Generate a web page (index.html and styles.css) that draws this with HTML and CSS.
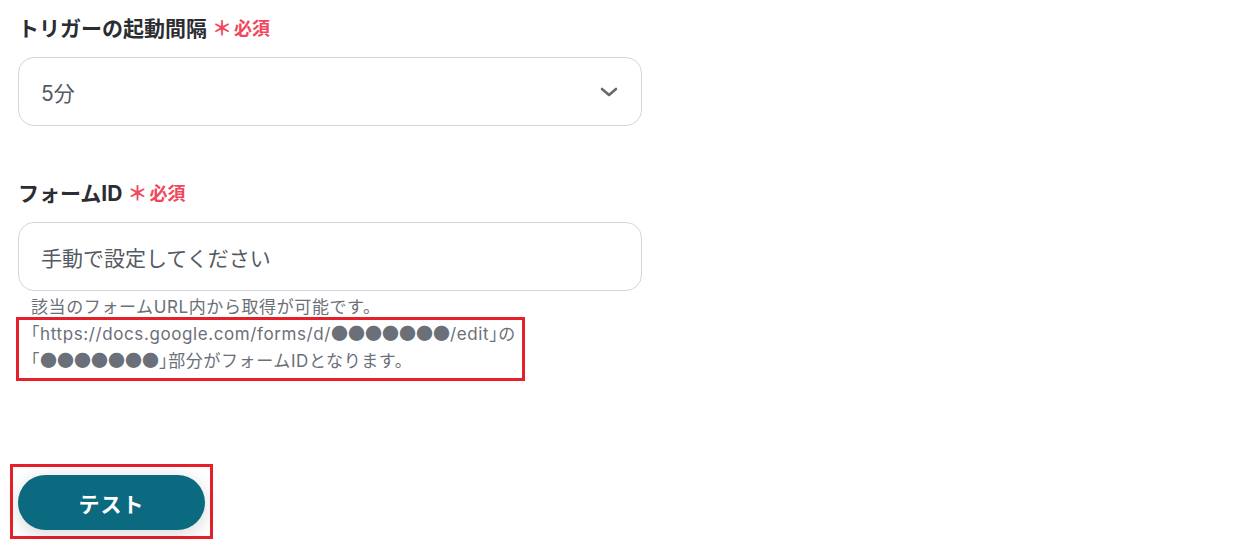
FILE: index.html
```html
<!DOCTYPE html>
<html lang="ja">
<head>
<meta charset="utf-8">
<link rel="stylesheet" href="styles.css">
</head>
<body>
<div class="page">
  <div class="field field-first">
    <div class="label">トリガーの起動間隔<span class="req"><span class="star">＊</span>必須</span></div>
    <div class="box select">
      <span class="value">5分</span>
      <svg class="chev" width="18" height="10" viewBox="0 0 18 10"><path d="M2 2 L9 8 L16 2" fill="none" stroke="#666a70" stroke-width="2.6" stroke-linecap="round" stroke-linejoin="round"/></svg>
    </div>
  </div>
  <div class="field">
    <div class="label">フォームID<span class="req"><span class="star">＊</span>必須</span></div>
    <div class="box input"><span class="placeholder">手動で設定してください</span></div>
    <div class="help">
      <div class="help-line first">該当のフォームURL内から取得が可能です。</div>
      <div class="highlight">
        <div class="help-line"><span class="br">「</span>https://docs.google.com/forms/d/<span class="dots">●●●●●●●</span>/edit<span class="br">」</span>の</div>
        <div class="help-line"><span class="br">「</span><span class="dots">●●●●●●●</span><span class="br">」</span>部分がフォームIDとなります。</div>
      </div>
    </div>
  </div>
  <div class="btn-highlight">
    <button class="btn">テスト</button>
  </div>
</div>
</body>
</html>
```

FILE: styles.css
```css
html, body {
  margin: 0;
  padding: 0;
  background: #ffffff;
}
body {
  font-family: "Inter", "Noto Sans CJK JP", sans-serif;
  color: #2b2d31;
}
.page {
  padding: 14px 0 0 18px;
  width: 624px;
}
.field {
  display: flex;
  flex-direction: column;
}
.field + .field {
  margin-top: 53px;
}
.label {
  font-size: 21px;
  font-weight: 700;
  line-height: 30px;
  color: #2b2d31;
  display: flex;
  align-items: center;
}
.req {
  color: #f0475c;
  font-size: 18px;
  font-weight: 700;
  margin-left: 5px;
  display: flex;
  align-items: center;
}
.star {
  font-size: 20px;
  margin-right: 2px;
}
.box {
  margin-top: 13px;
  border: 1px solid #d3d6dd;
  border-radius: 16px;
  box-sizing: border-box;
  height: 69px;
  display: flex;
  align-items: center;
  padding: 0 22px;
}
.select {
  justify-content: space-between;
}
.value, .placeholder {
  font-size: 21px;
  color: #555a62;
}
.chev {
  margin-right: 1px;
}
.help {
  margin-left: -2px;
  margin-top: 6px;
  font-size: 17px;
  color: #6b7078;
  line-height: 26px;
  letter-spacing: 0.6px;
}
.help-line {
  white-space: nowrap;
}
.help-line.first {
  padding-left: 15px;
  line-height: 20px;
}
.br {
  font-family: "Noto Sans CJK JP", sans-serif;
  font-feature-settings: "halt";
}
.dots {
  font-family: "Noto Sans CJK JP", sans-serif;
  letter-spacing: 0;
}
.highlight {
  border: 3px solid #e5202b;
  padding: 0 6px 4px 12px;
  width: fit-content;
}
.btn-highlight {
  margin-top: 83px;
  margin-left: -8px;
  border: 3px solid #e5202b;
  padding: 8px 5px 6px 5px;
  width: fit-content;
}
.btn {
  display: block;
  width: 187px;
  height: 55px;
  border: none;
  border-radius: 28px;
  background: #0b6a80;
  color: #ffffff;
  font-family: "Inter", "Noto Sans CJK JP", sans-serif;
  font-size: 21px;
  font-weight: 700;
  letter-spacing: 1px;
  box-shadow: 0 4px 18px rgba(0, 0, 0, 0.16);
}
```
